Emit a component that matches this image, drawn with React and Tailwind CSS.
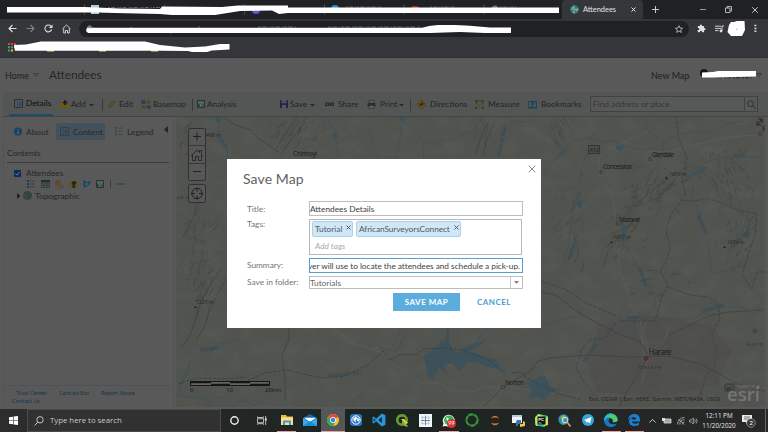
import React from "react";

function Svg({ w, h, vb, className = "", children }) {
  return (
    <svg width={w} height={h} viewBox={vb || `0 0 ${w} ${h}`} className={`block shrink-0 ${className}`} fill="none">
      {children}
    </svg>
  );
}

/* ---------- Browser ---------- */

function BrowserChrome() {
  return (
    <div className="relative h-[58px] w-full shrink-0 bg-[#35363a]">
      <div className="flex h-[19px] bg-[#202124]">
        <div className="w-[562px] shrink-0" />
        <div className="flex w-[81px] items-center rounded-t-[4px] bg-[#35363a] pl-[8px]">
          <Svg w={9} h={9}>
            <circle cx="4.5" cy="4.5" r="4.2" fill="#2d6f9c" />
            <path d="M1 3l2-2 2 1-1 2-2 1zM5 4l3-1 .5 2L6 7zM2 6l2 0 1 2-2 0z" fill="#6fa84f" />
            <path d="M.3 4.5h8.4M4.5.3v8.4" stroke="#9fc6da" strokeWidth=".4" />
          </Svg>
          <span className="ml-[4px] w-[48px] text-[7.4px] leading-[10px] text-[#e4e5e7]">Attendees</span>
          <Svg w={5} h={5}><path d="M.5.5l4 4M4.500.5l-4 4" stroke="#e8eaed" strokeWidth="1" /></Svg>
        </div>
        <div className="flex grow items-center pl-[9px]">
          <Svg w={7} h={7}><path d="M3.500 0v7M0 3.500h7" stroke="#c8cacd" strokeWidth="1" /></Svg>
          <Svg w={6} h={6} className="ml-[41px]"><path d="M0 2.500h6" stroke="#b9babc" strokeWidth=".8" /></Svg>
          <Svg w={7} h={7} className="ml-[19px]"><path d="M.5 2h4.500v4.500H.5zM2 2V.5h4.500V5H5" stroke="#d5d6d8" strokeWidth=".8" /></Svg>
          <Svg w={6} h={6} className="ml-[20px]"><path d="M.2.2l5.600 5.600M5.800.2L.2 5.800" stroke="#d5d6d8" strokeWidth=".9" /></Svg>
        </div>
      </div>
      <div className="flex h-[19px] items-center pl-[8px]">
        <Svg w={9} h={9}><path d="M8.500 4.500H1M4.500 1L1 4.500 4.500 8" stroke="#dfe0e3" strokeWidth="1.100" /></Svg>
        <Svg w={9} h={9} className="ml-[9px]"><path d="M.5 4.500H8M4.500 1L8 4.500 4.500 8" stroke="#808186" strokeWidth="1.100" /></Svg>
        <Svg w={9} h={9} className="ml-[9px]">
          <path d="M7.600 5.500A3.400 3.400 0 1 1 7 2.300" stroke="#dfe0e3" strokeWidth="1.100" /><path d="M8.500.5v3.600H4.900z" fill="#dfe0e3" />
        </Svg>
        <Svg w={9} h={10} className="ml-[9px]"><path d="M.4 5L4.500 1l4.100 4M1.700 4.500V9h1.800V6.500h2V9h1.800V4.500" stroke="#dfe0e3" strokeWidth=".9" /></Svg>
        <div className="ml-[8px] flex h-[16px] w-[610px] items-center justify-end rounded-full bg-[#202124] pr-[6px]">
          <Svg w={8} h={8} vb="0 0 24 24"><path d="M12 2l3 7 8 .7-6 5 2 7.600-7-4.200-7 4.200 2-7.600-6-5 8-.7z" stroke="#c4c6c9" strokeWidth="2.400" /></Svg>
        </div>
        <Svg w={9} h={9} vb="0 0 24 24" className="ml-[8px]">
          <path d="M20.500 11H19V7a2 2 0 0 0-2-2h-4V3.500a2.500 2.500 0 0 0-5 0V5H4a2 2 0 0 0-2 2v3.800h1.500a2.700 2.700 0 0 1 0 5.400H2V20a2 2 0 0 0 2 2h3.800v-1.500a2.700 2.700 0 0 1 5.400 0V22H17a2 2 0 0 0 2-2v-4h1.500a2.500 2.500 0 0 0 0-5z" fill="#e1e2e4" />
        </Svg>
        <Svg w={9} h={8} className="ml-[9px]">
          <path d="M0 1.200h6M0 3.400h6M0 5.600h3.500M7 6V1h2" stroke="#dfe0e3" strokeWidth=".9" /><circle cx="6" cy="6" r="1.400" fill="#dfe0e3" />
        </Svg>
        <Svg w={18} h={16} className="ml-[3px]"><path d="M4 1l3 0L10 0 17.500 0 18 9 15 15 4 15 .5 11 2 4z" fill="#fff" /><path d="M9 9l1.500-1.500" stroke="#888" strokeWidth=".7" /></Svg>
        <Svg w={3} h={9} className="ml-[9px]"><path d="M.4.800h2v1.500h-2zM.4 3.700h2v1.500h-2zM.4 6.600h2v1.500h-2z" fill="#d6d8da" /></Svg>
      </div>
      <div className="flex h-[19px] items-center pl-[8px]">
        <Svg w={8} h={9}>
          <path d="M0 0h2v2H0zM3 0h2v2H3zM6 0h2v2H6z" fill="#dc4636" /><path d="M0 3.300h2v2H0zM0 6.600h2v2H0z" fill="#41a560" />
          <path d="M3 3.300h2v2H3z" fill="#4286ef" /><path d="M6 3.300h2v2H6zM3 6.600h2v2H3z" fill="#edb93a" />
        </Svg>
      </div>
      <svg className="absolute left-0 top-0" width="768" height="58" viewBox="0 0 768 58" fill="none">
        <path d="M84.500 4v11M164.500 4v11M244.500 4v11M324.500 4v11M404 4v11M484 4v11" stroke="#55565a" strokeWidth=".7" />
        <rect x="91" y="5" width="8" height="9" fill="#a9d1de" />
        <circle cx="256" cy="10" r="4" fill="#5b56df" /><circle cx="335" cy="9" r="4" fill="#238fd1" />
        <path d="M411 7q4-2 8 0v5h-8z" fill="#d52524" /><circle cx="495" cy="9" r="3.500" fill="#777" />
        <path d="M430 7h24M346 7h35M500 7h16M108 7.500h52" stroke="#66676b" strokeWidth="1" strokeDasharray="2 1.200 4 2 1 1" />
        <path d="M7 7L85 7L120 8.500L160 9L162 6.500L222 7L238 5.500H288V7.500H559V13H288L279 14L272 10.500L240 11L215 15H172L160 14L115 13L98 12.500H7z" fill="#fff" />
        <path d="M89 26.500h3M130 28l2-1M170 33h2M198 27h2M258 27h38M328 27h92" stroke="#5f6064" strokeWidth="1" strokeDasharray="3 1 5 2 1 1" />
        <path d="M87 27.500L95 27.800H422L429 26L438 25H455L470 25.800L490 27.500H511V33H485L460 32L430 33H88L86 31z" fill="#fff" />
        <path d="M88 29v-1.500q0-2 1.300-2T90.600 27.500V29" stroke="#bbb" strokeWidth=".6" />
        <path d="M47 50.800h7M99 50.800h7M151 50.800h7" stroke="#edc76c" strokeWidth="1.500" />
        <path d="M14 45L26 44.500L41 41.500H145L160 45L185 47.500L205 46.500L220 44H229.500V49.500L212 50.500L207 52H192L188 51L160 50.800H15z" fill="#fff" />
        <path d="M0 57.500h768" stroke="#303136" />
      </svg>
    </div>
  );
}

/* ---------- App header and toolbar ---------- */

function Caret() {
  return <Svg w={5} h={3} className="mt-[2px]"><path d="M0 0h5L2.500 2.600z" fill="#272727" /></Svg>;
}
function Sep() {
  return <div className="mt-[2px] h-[12px] w-px shrink-0 bg-[#393939]" />;
}

function MapHeader() {
  return (
    <div className="flex h-[34px] shrink-0 items-center text-[#202020]">
      <span className="w-[27px] pl-[5px] text-[9px] whitespace-nowrap pt-[2px]">Home</span>
      <Svg w={6} h={4} className="ml-[6px]"><path d="M.4.500h5L2.900 3.500z" stroke="#2d2d2d" strokeWidth=".6" /></Svg>
      <span className="ml-[10px] text-[11.800px] whitespace-nowrap text-[#252525]">Attendees</span>
      <div className="grow" />
      <span className="w-[49px] text-[9px] whitespace-nowrap pt-[2px]">New Map</span>
      <svg width="68" height="14" viewBox="700 68 68 14" fill="none" className="block shrink-0">
        <circle cx="704" cy="73" r="4" fill="#151515" />
        <path d="M715 77.500h37" stroke="#333" strokeWidth="1.500" strokeDasharray="2 1 4 2" />
        <path d="M702 72.500L713 72L718 71H756V76.500L714 77.500H702z" fill="#fff" />
        <path d="M757 73.500h4.500l-2.200 3z" stroke="#252525" strokeWidth=".6" />
      </svg>
    </div>
  );
}

function Toolbar() {
  const t = "whitespace-nowrap text-[8.300px] leading-[12px]";
  return (
    <div className="ml-[3px] flex h-[25px] shrink-0 items-center border-b border-[#434545] bg-[#535655] text-[#242424]">
      <div className="flex h-[24px] w-[54px] shrink-0 items-center pl-[6px]">
        <div className="flex h-full w-[44px] items-center border-b-2 border-[#1b4d68] pl-[5px]">
          <Svg w={9} h={9}><path d="M.5.500h8v8h-8z" stroke="#252d35" strokeWidth=".9" /><path d="M3.500.500v8" stroke="#39434b" strokeWidth=".6" /><path d="M5 3h2v4H5z" fill="#214b71" /></Svg>
          <span className={`${t} ml-[3px] text-[#0c0c0c]`}>Details</span>
        </div>
      </div>
      <div className="flex w-[45px] shrink-0 items-center pl-[3px]">
        <Svg w={9} h={9}><path d="M0 4l2-2 2 2h4l1 4H0z" fill="#6d5812" /><path d="M5 0v5M2.800 2.500h4.600" stroke="#181818" strokeWidth="1.600" /></Svg>
        <span className={`${t} ml-[2px] w-[18px]`}>Add</span><Caret />
      </div>
      <Sep />
      <div className="flex w-[38px] shrink-0 items-center pl-[5px]">
        <Svg w={8} h={8}><path d="M.5 7.500l1-2.500L6 .7l1.400 1.500L3 6.700z" fill="#625021" stroke="#3a3016" strokeWidth=".4" /></Svg>
        <span className={`${t} ml-[3px]`}>Edit</span>
      </div>
      <div className="flex w-[51px] shrink-0 items-center">
        <Svg w={10} h={9}>
          <path d="M0 0h4.500v4H0z" fill="#324550" /><path d="M5.500 0H10v4H5.500z" fill="#60512b" /><path d="M0 5h4.500v4H0z" fill="#5e4c2b" /><path d="M5.500 5H10v4H5.500z" fill="#30485a" /><path d="M1 1l3 2M6 1l3 2M1 6l3 2M6 6l3 2" stroke="#1e3431" strokeWidth=".7" />
        </Svg>
        <span className={`${t} ml-[2px]`}>Basemap</span>
      </div>
      <Sep />
      <div className="flex w-[87px] shrink-0 items-center pl-[4px]">
        <MiniMap />
        <span className={`${t} ml-[2px]`}>Analysis</span>
      </div>
      <div className="flex w-[45px] shrink-0 items-center">
        <Svg w={8} h={8}><path d="M0 0h8v8H0z" fill="#272149" /><path d="M1.500 0h5v3.200h-5zM2 5h4v3H2z" fill="#555761" /><path d="M2.500 1.500h3" stroke="#333" strokeWidth=".5" /></Svg>
        <span className={`${t} ml-[2px] w-[20px]`}>Save</span><Caret />
      </div>
      <div className="flex w-[42px] shrink-0 items-center">
        <Svg w={9} h={5}><path d="M.7 1h2.800v2.500H.7zM5.500 1h2.800v2.500H5.500zM2.500 2.200h4" stroke="#292929" strokeWidth="1.100" /></Svg>
        <span className={`${t} ml-[4px]`}>Share</span>
      </div>
      <div className="flex w-[43px] shrink-0 items-center">
        <Svg w={9} h={9}><path d="M.5 3h8v3.500h-8z" fill="#2c3031" /><path d="M2 .5h5V3H2zM2 5.500h5v3H2z" fill="#606362" stroke="#292c2c" strokeWidth=".6" /></Svg>
        <span className={`${t} ml-[4px] w-[19px]`}>Print</span><Caret />
      </div>
      <Sep />
      <div className="flex w-[64px] shrink-0 items-center pl-[6px]">
        <Svg w={9} h={9}><path d="M4.500 0L9 4.500 4.500 9 0 4.500z" fill="#6a5411" stroke="#2d2813" strokeWidth=".5" /><path d="M3.300 6V4H6M4.800 2.700L6.200 4 4.800 5.300" stroke="#111" strokeWidth=".9" /></Svg>
        <span className={`${t} ml-[4px]`}>Directions</span>
      </div>
      <div className="flex w-[53px] shrink-0 items-center">
        <Svg w={9} h={9}><path d="M1.500 1h6v4h-6z" stroke="#1c5034" strokeWidth="1" /><path d="M0 4.500h9v3H0z" fill="#715238" /><path d="M0 0h2.500v2.500H0zM6.500 0H9v2.500H6.500zM0 7h2v2H0zM7 7h2v2H7z" fill="#214a34" /><path d="M2 5.500v2M4.500 5.500v2M7 5.500v2" stroke="#3c2d20" strokeWidth=".6" /></Svg>
        <span className={`${t} ml-[4px]`}>Measure</span>
      </div>
      <div className="flex w-[62px] shrink-0 items-center">
        <Svg w={9} h={9}><path d="M.5 1.500h3.500v6H.5zM4.500 1.500h4v6h-4z" stroke="#20394c" strokeWidth=".8" /><path d="M0 8.300h9M5.500 0v4.500M6.800 0v4.500" stroke="#155275" strokeWidth="1" /></Svg>
        <span className={`${t} ml-[4px]`}>Bookmarks</span>
      </div>
      <div className="flex h-[16px] w-[168px] shrink-0 items-center border border-[#404242] bg-[#575959]">
        <span className={`${t} w-[153px] pl-[2px] text-[#373737]`}>Find address or place</span>
        <div className="flex h-full grow items-center justify-center border-l border-[#404242]">
          <Svg w={9} h={9}><circle cx="3.600" cy="3.600" r="2.900" stroke="#252525" strokeWidth=".8" /><path d="M5.700 5.700l3 3" stroke="#252525" strokeWidth="1" /></Svg>
        </div>
      </div>
    </div>
  );
}

function MiniMap() {
  return <Svg w={8} h={8}><path d="M.4.400h7.200v7.200H.4z" fill="#3e5551" stroke="#1d2a2c" strokeWidth=".8" /><path d="M1 2l2 1 1-2M3 7l1-3 3-2" stroke="#777645" strokeWidth="1" /><path d="M1 6l2-1" stroke="#222" /></Svg>;
}

/* ---------- Side panel ---------- */

function SidePanel() {
  const t = "whitespace-nowrap text-[8.400px] leading-[12px]";
  return (
    <div className="ml-[3px] flex w-[171px] shrink-0 flex-col border-x border-[#525354] pr-[2px] text-[#272727]">
      <div className="flex h-[28px] items-center pt-[1px] pl-[10px]">
        <Svg w={8} h={9}><circle cx="4" cy="4.500" r="4" fill="#17435f" /><path d="M4 2v1M4 4v3" stroke="#777" strokeWidth="1.100" /></Svg>
        <span className={`${t} ml-[4px] w-[30px]`}>About</span>
        <div className="flex h-[17px] w-[49px] items-center bg-[#42515b] pl-[4px]">
          <Svg w={9} h={9}><path d="M.5.500h8v8h-8z" stroke="#303c45" strokeWidth=".8" /><path d="M3 .5v8" stroke="#303c45" strokeWidth=".6" /><path d="M5 3h1.500v4H5z" fill="#253f56" /></Svg>
          <span className={`${t} ml-[4px]`}>Content</span>
        </div>
        <Svg w={8} h={9} className="ml-[10px]"><path d="M0 0h2v2H0z" fill="#175273" /><path d="M0 3.300h2v2H0z" fill="#5a4720" /><path d="M0 6.600h2v2H0z" fill="#1c5839" /><path d="M3.500 1H8M3.500 4.300H8M3.500 7.600H8" stroke="#30475a" strokeWidth=".9" /></Svg>
        <span className={`${t} ml-[4px] w-[37px]`}>Legend</span>
        <Svg w={4} h={7} className="mb-[4px]"><path d="M4 0v7L0 3.500z" fill="#252525" /></Svg>
      </div>
      <div className="ml-[3px] flex h-[18px] w-[162px] items-center border-b border-[#3c3c3c]"><span className={`${t} -mt-[2px]`}>Contents</span></div>
      <div className="mt-[4px] flex h-[12px] items-center pl-[10px]">
        <Svg w={7} h={7}><rect width="7" height="7" rx="1" fill="#092b61" /><path d="M1.400 3.500l1.500 1.600L5.700 1.900" stroke="#888" strokeWidth=".9" /></Svg>
        <span className={`${t} ml-[5px]`}>Attendees</span>
      </div>
      <div className="flex h-[10px] items-center pl-[23px]">
        <Svg w={9} h={8}><path d="M1 0v8" stroke="#173e50" strokeWidth="2" strokeDasharray="2 1" /><path d="M3 1h5M3 4h5M3 7h5" stroke="#343434" strokeDasharray="1.500 .7" /></Svg>
        <Svg w={9} h={8} className="ml-[5px]"><path d="M.5.500h8v7h-8zM.5 3h8M.5 5.300h8M3 1v6M6 1v6" stroke="#30393e" strokeWidth=".8" /><path d="M0 0h9v2H0z" fill="#222f39" /></Svg>
        <Svg w={9} h={9} className="ml-[5px]"><circle cx="3" cy="3" r="3" fill="#6c4132" /><path d="M3 2l5 3-1 4H2z" fill="#5a5428" /><path d="M5 5h4v4H5z" fill="#465166" /></Svg>
        <Svg w={9} h={8} className="ml-[5px]"><path d="M0 1h9v7H0z" fill="#665522" /><path d="M3.500 8V5L2.500 3 4 1h2l1.500 2L6 5v3z" fill="#252525" /></Svg>
        <Svg w={8} h={8} className="ml-[5px]"><path d="M0 0l4 2 4-1-2 4-5 3z" fill="#1a465c" /><circle cx="3.500" cy="4" r="1.500" fill="#3e6272" /></Svg>
        <div className="ml-[5px]"><MiniMap /></div>
        <div className="ml-[6px] h-[8px] w-px bg-[#3c3c3c]" />
        <Svg w={9} h={2} className="ml-[5px]"><path d="M0 1h2M3.200 1h2M6.400 1h2" stroke="#173e5a" strokeWidth="1.300" /></Svg>
      </div>
      <div className="flex h-[13px] items-center pl-[13px]">
        <Svg w={4} h={6}><path d="M0 0l3.500 3L0 6z" fill="#202020" /></Svg>
        <Svg w={9} h={9} className="ml-[2px]"><circle cx="4.500" cy="4.500" r="4" fill="#404948" stroke="#2b3333" strokeWidth=".7" /><path d="M4 1.500l3 1 .5 3-3 2-1-3z" fill="#214f38" /></Svg>
        <span className={`${t} ml-[3px]`}>Topographic</span>
      </div>
      <div className="grow" />
      <div className="ml-[2px] h-[22px] w-[164px] border-t border-[#505152] pt-[3px] pl-[6px] text-[5.700px] leading-[8px] whitespace-nowrap text-[#18374a]">
        <div className="flex pl-[4px]"><span className="w-[43px]">Trust Center</span><span className="w-[42px]">Contact Esri</span><span>Report Abuse</span></div>
        <div>Contact Us</div>
      </div>
    </div>
  );
}

/* ---------- Map ---------- */

function makeRelief() {
  let s = 73;
  const rnd = () => ((s = (s * 16807) % 2147483647) / 2147483647);
  const clusters = [
    [188, 145, 14, 30, -1, 30], [200, 285, 14, 50, -1.1, 60], [200, 225, 18, 25, -1, 25],
    [288, 137, 34, 18, -0.9, 35], [482, 137, 10, 18, -1.2, 18], [558, 130, 12, 16, 1.2, 22],
    [655, 190, 40, 30, -0.7, 90], [625, 230, 25, 35, -0.9, 50], [725, 180, 32, 40, 1.1, 75],
    [735, 245, 22, 35, -1, 40], [565, 220, 20, 60, -1.1, 30], [655, 285, 50, 25, -0.3, 18],
  ];
  const strokes = [];
  clusters.forEach(([cx, cy, rx, ry, a, n]) => {
    for (let i = 0; i < n; i++) {
      const x = cx + (rnd() + rnd() - 1) * rx;
      const y = cy + (rnd() + rnd() - 1) * ry;
      const l = 2 + rnd() * 6;
      const g = a + (rnd() - 0.5) * 0.9;
      const dx = Math.cos(g) * l;
      const dy = Math.sin(g) * l;
      strokes.push(`M${x.toFixed(1)} ${y.toFixed(1)}q${(dx / 2 + 1).toFixed(1)} ${(dy / 2 + 1).toFixed(1)} ${dx.toFixed(1)} ${dy.toFixed(1)}`);
    }
  });
  return strokes;
}
const relief = makeRelief();

function MapCanvas() {
  return (
    <svg width="589" height="290" viewBox="176 117 589 290" className="block" fill="none" fontFamily="'Noto Sans', sans-serif">
      <rect x="176" y="117" width="589" height="290" fill="#51534f" />
      <filter id="terrain" x="0" y="0" width="100%" height="100%">
        <feTurbulence type="fractalNoise" baseFrequency=".05 .07" numOctaves="4" seed="8" />
        <feColorMatrix values="0 0 0 0 .22  0 0 0 0 .23  0 0 0 0 .2  .8 0 0 0 -.32" />
      </filter>
      <rect x="176" y="117" width="589" height="290" filter="url(#terrain)" opacity=".28" />
      <path d="M600 325l40-10 70 10 22 25-15 35-60 12-60-5-10-30z" fill="#4b4c49" opacity=".4" />
      <g stroke="#3b3e36" strokeLinecap="round">
        <path d={relief.filter((_, i) => i % 2).join("")} strokeWidth="1.200" opacity=".4" />
        <path d={relief.filter((_, i) => !(i % 2)).join("")} strokeWidth=".8" opacity=".4" />
      </g>
      <path d="M220 270l-8 12-12 22-4 14-6 18-9 12M226 278l-8 16-8 14-6 20-8 12M200 200l-8 20-10 18M297 117l-10 14-12 20M305 122l-14 18-10 14M488 122l-6 12-6 20M494 124l-7 14-4 18M660 185l-18 14-10 8-8 12M632 222l-14 16-10 14-5 16" stroke="#3a3d37" strokeWidth=".9" opacity=".65" />
      <g stroke="#5c5e59" strokeWidth=".8">
        <path d="M601 180l10 12 3 12 1 18 8 15-5 16 2 20 7 15 5 20 8 12 4 25" />
        <path d="M600 172l-2-6 2-10 16-10 32-15M566 117l10 14 14 15M758 135l-30 2-34 8-22 6-25 1" />
        <path d="M333 328l17 14 30 10 18 15 22 16h21l9 9h22l12-5h24l50 7M648 358l-6 25M650 357l-6-25 2-12M637 325l4 12 4 20M645 357l20-18 5-14" />
      </g>
      <g stroke="#434442" strokeWidth=".9">
        <path d="M223 117l12 8 16 5 8 9 20 13M289 328v12l-7 14 3 25v21M484 406l18-18 16-10 13-7 7-10 12-3 38-3 40 2 42-1 30 8 38 20 27 7" />
        <path d="M541 292l15 3 20 16 23 13 24 12 17 5 8 15M648 358l-20 32-9 17" />
        <path d="M668 335l20-9 20-10 20-4 36-2" />
      </g>
      <g stroke="#40404b" strokeWidth=".9" strokeDasharray="4 1.300">
        <path d="M541 281l24 8 21 14 30 13 6 5h33l6-22 7-14-8-14 6-9 4-14-4-18 6-17 10-13 12 1 13-3 15 5 15 7 20 4-2 20-8 25-5 16 10 14 5-17h14M616 323l-11 15-15 2-8 8-6 20 8 14 12 15M668 287l22 8 18 2 10 6 2 16-8 15 5 20-2 12-9 10-7 23M686 196l-4-18 5-20-8-18-3-23" />
      </g>
      <g stroke="#3b525b" strokeWidth=".8">
        <path d="M219 117l-1 19 8 13 1 12M322 117l3 8-9 5-6 15-7 5M326 117l9 14 4 28M356 127l15 7 4 20 5 6M400 120l12 7 8 9 3 10 1 17M402 121l-3 23-4 18M423 143l16-1 16-4 12-6 18-3" />
        <path d="M176 332l4 -2M177 395l8-18 6-18 14-8 18-8 17-3M187 398l-9-9 5-12 8-8M176 395l30 4 4 8 3-8 10-2 12 10 5-8 14 6 12-3" />
        <path d="M195 203v40l-13 20-6 8M190 263l18-3 10-6 8-4M180 280l16-1 8 6 14 2 8 6" />
        <path d="M542 175l14-17 16-17 15-3 14 4 14-1 8 5 18 4 14-2 20-12 20-5 18 2 14-9 17-3M587 153l-6 17-4 26-5 14-3 34-8 24-8 8M645 117l3 14 16 10-3 18-8 12-10 20-18 22M624 245l8 10 7 17 10 15 7 16-13 18M694 180l-2 15 8 20 6 18M757 183l-6 20-8 27-4 12M758 157h-34l-13 3-28 15M707 240l5 34 17-4 15-10" />
        <path d="M542 325l34-9M610 336l17-9 20-10 40 3 20-7M512 121l16 1 8-3M361 328l20 20 16 3 10-20M402 326l-10 22M468 352l8-10 12-15M346 406l17-13M710 303l15 5 13-2 10 5 12-2" />
      </g>
      <g fill="#3d515a">
        <path d="M423.700 356.700L436 346.700L440 342L445.700 340L446.700 328H449.300L448.700 341.700L452.700 350L459.300 353.300L462.700 348.300L472.700 344.300L486 340L476 347.700L469 351.700L486 356.700L496 360L507.700 375L496 368L486 366.700L479 363L469 361.700L464 365L459 371.700L452.700 363.300L444 365L446 374L439 368L432.700 380L427.700 375z" />
        <path d="M533.700 380L543.700 375L547 380L550 386.700L560 390L548.700 393.300L543.700 401.700L538.700 396.700L528.700 398L532 390L527 383z" />
        <path d="M558 157l4-6 4-3-2 7zM616 145l8 2-3 4-5-2zM657 157l3-3-2 6zM686 177l14-9 8-2-3 5-9 3-7 4zM333 133h5v5h-4zM398 117h7l-1 5-5-3zM621 230l6-3-1 9-2 8-3-7zM578 200l5 1-2 8-3-2zM215 117h6v5h-5z" />
        <path d="M221 137l6 9 1 12-2-9-7-8z" />
      </g>
      <path d="M178 384l18-6 36 1 12-2 5 3 16-7 22-3 16 4 20 4 22-2 24-12 14-13 6 9 12-6 15 1 7-6 20-1 20 2 28 11 6 7M512 373l8-1 8 7 16 8 14 7 22 5" stroke="#2f4344" strokeWidth=".9" strokeDasharray="3 1.500" />

      <g fill="#1c1d1b" fontSize="6.300">
        <text x="293" y="155.500" textLength="24">Chinhoyi</text>
        <text x="652" y="156.500" textLength="22">Glendale</text>
        <text x="603" y="169" textLength="29">Concession</text>
        <text x="619" y="222" textLength="21">Mazowe</text>
        <text x="505" y="384.500" textLength="19">Norton</text>
        <text x="648.500" y="355" fontSize="8" textLength="23">Harare</text>
        <text x="762" y="131">B</text>
      </g>
      <g fill="#2a2b29" fontSize="5.300" fontStyle="italic">
        <text x="206" y="137">466 m</text><text x="196" y="304">1221 m</text><text x="669" y="176">1618 m</text><text x="613" y="239">1617 m</text><text x="727" y="244">1654 m</text>
      </g>
      <g fill="#29475a" fontSize="5.400" fontStyle="italic">
        <text x="200" y="351" textLength="19" transform="rotate(-5 200 351)">Dzingwe</text>
        <text x="328" y="377" textLength="34" transform="rotate(-4 328 377)">Munyati Rvr</text>
        <text x="734" y="157">Poti</text>
        <text x="500" y="157" transform="rotate(-78 500 157)">Mazowe River</text>
        <text x="570" y="261" transform="rotate(-73 570 261)">Madzagavu</text>
        <text x="638" y="268" transform="rotate(72 638 268)">Mazowe</text>
        <text x="696" y="216" transform="rotate(65 696 216)">Mateperi</text>
        <text x="746" y="237" transform="rotate(-72 746 237)">Inyauri</text>
        <text x="626" y="319">Gwebi</text>
        <text x="702" y="313" transform="rotate(-16 702 313)">Umwindsi</text>
        <text x="585" y="363" transform="rotate(-58 585 363)">Marimba</text>
      </g>
      <g fill="#343634" fontSize="6">
        <text x="638" y="368.500" textLength="23">Harare</text><text x="746" y="346" textLength="17">Goro</text><text x="177" y="199" fontSize="5">a k u</text>
      </g>
      <rect x="588.500" y="145.500" width="11" height="8" fill="#4b4d49" stroke="#2a2b2a" strokeWidth=".7" />
      <text x="589.700" y="151.700" fontSize="5" fill="#20211f">A12</text>
      <rect x="725" y="384" width="9" height="7" fill="#4b4d49" stroke="#343634" strokeWidth=".8" /><text x="726.500" y="389.500" fontSize="4" fill="#20211f">A3</text>
      <g stroke="#333532" strokeWidth=".7"><circle cx="650" cy="159" r="1.600" /><circle cx="601" cy="172" r="1.300" /><circle cx="617" cy="224" r="1.300" /><circle cx="503" cy="387" r="1.700" fill="#555" /><circle cx="760" cy="134" r="1.500" /></g>
      <path d="M194 308l1.500-2 1.500 2zM610 243l1.500-2 1.500 2zM665 179l1.500-2 1.500 2zM723 248l1.500-2 1.500 2z" fill="#1e1f1d" />
      <circle cx="646" cy="358.500" r="2" fill="#6c2c18" stroke="#35251e" strokeWidth=".5" />
      <circle cx="755" cy="331" r="2.500" fill="#414b40" />
      <path d="M757 125l5-6M758 119h4v4M757 121v4h4" stroke="#1c1c1c" strokeWidth=".8" />

      <g stroke="#202020" strokeWidth="1">
        <rect x="188.500" y="128.500" width="17" height="52" rx="2" fill="#575757" stroke="#303030" /><path d="M188 145.500h18M188 163.500h18" stroke="#303030" strokeWidth=".8" />
        <path d="M193 136.500h8M197 132.500v8M193 171.500h8" />
        <path d="M191 156l6-6 2.500 2.500v-2h2v4l1.500 1.500M192.500 155v5.500h3v-4h3v4h3v-5.500" strokeWidth=".8" />
        <rect x="188.500" y="184.500" width="17" height="18" rx="2" fill="#575757" stroke="#303030" /><circle cx="197" cy="193.500" r="5.200" /><path d="M197 187.500v4M197 195.500v4M191 193.500h4M199 193.500h4" />
      </g>
      <rect x="190.500" y="381.500" width="79" height="4" fill="#656562" stroke="#151515" /><path d="M191 382.500h20M230 382.500h20M211 384.500h19M250 384.500h19" stroke="#171717" strokeWidth="1.500" />
      <g fill="#191919" fontSize="6"><text x="190" y="391.500">0</text><text x="226" y="391.500">10</text><text x="265" y="391.500" textLength="16">20km</text></g>
      <text x="589" y="401" fontSize="5.200" fill="#222" textLength="131">Esri, CGIAR | Esri, HERE, Garmin, METI/NASA, USGS</text>
      <text x="727" y="401" fontSize="18.500" fontWeight="600" fontFamily="'Open Sans', sans-serif" fill="#767674" textLength="33" lengthAdjust="spacingAndGlyphs">esri</text>
      <text x="737" y="387.500" fontSize="3.300" fill="#777" textLength="18">POWERED BY</text><circle cx="758" cy="387" r="1.500" fill="#777" />
    </svg>
  );
}

/* ---------- Save dialog ---------- */

function Tag({ className, children }) {
  return (
    <div className={`flex h-[16px] items-center justify-between rounded-[2px] border border-[#a8d3ee] bg-[#d0e7f7] pl-[2px] pr-[1px] text-[#4f5b62] ${className}`}>
      <span className="whitespace-nowrap">{children}</span>
      <Svg w={5} h={5} className="mb-[3px]"><path d="M.5.500l4 4M4.500.500l-4 4" stroke="#4e5c64" strokeWidth="1" /></Svg>
    </div>
  );
}

function SaveDialog() {
  const label = "w-[62px] shrink-0 whitespace-nowrap text-[#757575]";
  return (
    <div className="absolute left-[227px] top-[159px] h-[169px] w-[314px] bg-white text-[8.300px] leading-[12px]">
      <div className="flex justify-between pt-[6px] pr-[5px]">
        <h2 className="ml-[16px] mt-[4px] text-[14px] leading-[20px] font-normal whitespace-nowrap tracking-[.1px] text-[#616161]">Save Map</h2>
        <Svg w={8} h={8}><path d="M.7.700l6.600 6.600M7.300.700L.7 7.300" stroke="#8b8b8b" strokeWidth="1" /></Svg>
      </div>
      <div className="ml-[20px] mt-[12px] flex items-center">
        <span className={label}>Title:</span>
        <div className="flex h-[15px] w-[214px] items-center border border-[#bdbdbd] text-[#3e3e3e]">Attendees Details</div>
      </div>
      <div className="ml-[20px] mt-[3px] flex">
        <span className={`${label} -mt-[1px]`}>Tags:</span>
        <div className="flex h-[36px] w-[213px] flex-col border border-[#b8b8b8] pt-[1px] pl-[2px]">
          <div className="flex gap-[3px]">
            <Tag className="w-[41px]">Tutorial</Tag>
            <Tag className="w-[105px] tracking-[-.08px]">AfricanSurveyorsConnect</Tag>
          </div>
          <span className="mt-[3px] pl-[3px] italic text-[#aaaaaa]">Add tags</span>
        </div>
      </div>
      <div className="ml-[20px] mt-[3px] flex items-center">
        <span className={`${label} -mt-[1px]`}>Summary:</span>
        <div className="flex h-[15px] w-[214px] items-center justify-end overflow-hidden border border-[#55a0d0] pr-[2px] tracking-[-.03px] whitespace-nowrap text-[#3f3f3f]">ver will use to locate the attendees and schedule a pick-up.</div>
      </div>
      <div className="ml-[20px] mt-[3px] flex items-center">
        <span className={`${label} -mt-[1px]`}>Save in folder:</span>
        <div className="flex h-[13px] w-[214px] items-center justify-between border border-[#bdbdbd] text-[#666]">
          Tutorials
          <div className="flex h-full w-[12px] items-center justify-center border-l border-[#c9c9c9]"><Svg w={5} h={3}><path d="M0 0h5L2.500 3z" fill="#858585" /></Svg></div>
        </div>
      </div>
      <div className="mt-[4px] ml-[166px] flex text-[8px] leading-[18px] tracking-[.5px] font-bold">
        <div className="h-[18px] w-[67px] bg-[#5badde] text-center text-white">SAVE MAP</div>
        <div className="w-[68px] text-center text-[#4d9dcd]">CANCEL</div>
      </div>
    </div>
  );
}

/* ---------- Taskbar ---------- */

function TaskCell({ open, active, children }) {
  return (
    <div className={`flex h-full w-[23.200px] shrink-0 flex-col items-center ${active ? "bg-[#52585a]" : ""}`}>
      <div className="flex h-[22px] items-center">{children}</div>
      <div className={`h-px self-stretch ${active ? "" : "mx-[2px]"} ${open ? "bg-[#f19a9b]" : ""}`} />
    </div>
  );
}

function Taskbar() {
  return (
    <div className="relative flex h-[23px] shrink-0 items-center bg-linear-to-r from-[#2d2d2d] via-[#1b2321] to-[#282828] text-[#e7e7e7]">
      <div className="flex w-[27px] shrink-0 justify-center"><Svg w={9} h={9}><path d="M0 1.300l4-.6v3.500H0zM4.600.600L9 0v4.200H4.600zM0 4.800h4v3.500l-4-.6zM4.600 4.800H9V9l-4.400-.6z" fill="#fff" /></Svg></div>
      <div className="flex h-full w-[194px] shrink-0 items-center border border-[#494b4a] bg-[#313131] pl-[6px]">
        <Svg w={10} h={10}><circle cx="6" cy="3.800" r="3.200" stroke="#d4d4d4" strokeWidth=".9" /><path d="M3.800 6.200L.5 9.600" stroke="#d4d4d4" strokeWidth=".9" /></Svg>
        <span className="ml-[6px] pt-[1px] font-['Open_Sans'] text-[7.800px] whitespace-nowrap text-[#c8c8c8]">Type here to search</span>
      </div>
      <div className="flex w-[27px] shrink-0 justify-center"><Svg w={9} h={9}><circle cx="4.500" cy="4.500" r="3.700" stroke="#f1f1f1" strokeWidth="1.400" /></Svg></div>
      <div className="flex w-[27px] shrink-0 justify-center"><Svg w={10} h={9}><path d="M.5 2.700h6v4h-6zM.5.500v1h6v-1M.5 8.700v-1h6v1M8.700 0v9" stroke="#d9d9d9" strokeWidth=".8" /><path d="M7.800 2.500h2v2h-2z" fill="#ddd" /></Svg></div>
      <TaskCell open><Svg w={12} h={10}><path d="M0 0h5l1 1.500h6V10H0z" fill="#eeb946" /><path d="M0 2.500h12V10H0z" fill="#ffdf83" /><path d="M2 10V5.500h8V10H8V7.500H4V10z" fill="#3a9bd9" /></Svg></TaskCell>
      <TaskCell><Svg w={14} h={12}><path d="M0 4l7-4 7 4v8H0z" fill="#1168b1" /><path d="M1 3.700h12L7 8z" fill="#fff" /><path d="M0 4l7 4.500L14 4v8H0z" fill="#36acec" /><path d="M0 12l7-5 7 5z" fill="#1b8bd5" /></Svg></TaskCell>
      <TaskCell active open><Svg w={12} h={12} vb="-6 -6 12 12"><circle r="6" fill="#f4c52e" /><path d="M0 0L-5.200-3A6 6 0 0 1 5.200-3z" fill="#dd493c" /><path d="M0 0L-5.200-3A6 6 0 0 0 0 6L2.600 1.500z" fill="#34a55a" /><circle r="2.900" fill="#fff" /><circle r="2.200" fill="#3e7fe5" /></Svg></TaskCell>
      <TaskCell><Svg w={12} h={12}><rect width="12" height="12" rx="3" fill="#2676c1" /><circle cx="6" cy="6" r="4.200" stroke="#fff" strokeWidth="1" /><path d="M3 4.500l3-2 1.500 2L5.500 6 6 8.500 4 7zM7.500 4l2 1-1 2.500-1.500-.5z" fill="#fff" /></Svg></TaskCell>
      <TaskCell><Svg w={14} h={14} vb="0 0 24 24"><path d="M17 1l6 3v16l-6 3L7 14l-4 4-2-1V7l2-1 4 4zM17 7l-6 5 6 5zM3 9v6l3-3z" fillRule="evenodd" fill="#2598db" /></Svg></TaskCell>
      <TaskCell><Svg w={13} h={13}><circle cx="6" cy="6" r="4.700" stroke="#659b32" strokeWidth="2.700" /><path d="M6 6l6.500 6.500H9L6 9z" fill="#8ab52c" /><path d="M5 5h3l4 4-2 1z" fill="#e8d33e" /></Svg></TaskCell>
      <TaskCell><Svg w={13} h={13}><path d="M0 0h13v13H0z" fill="#eff6fb" /><path d="M2 3.500h9M2 6.500h9M2 9.500h9M3.500 2v9M6.500 1v11M9.500 2v9" stroke="#9fb4c6" strokeWidth=".7" strokeDasharray="1.500 .6" /><path d="M6.500 2v9M2 6.500h9" stroke="#58738d" strokeWidth=".8" /></Svg></TaskCell>
      <TaskCell open>
        <div className="relative">
          <Svg w={14} h={13}><path d="M.5 12.500l1-3A6 6 0 1 1 4 12z" fill="#f4f4f4" /><circle cx="7" cy="6.300" r="4.900" fill="#31b456" /><path d="M4.700 3.500q-1 2 2 4.500t4 .5l-1.300-1.400-1.200.6-2-2 .6-1.200z" fill="#fff" /></Svg>
          <span className="absolute top-[5px] left-[5px] flex h-[9px] w-[9px] items-center justify-center rounded-full bg-[#df302f] text-[5.500px] text-white">99</span>
        </div>
      </TaskCell>
      <TaskCell><Svg w={14} h={14}><circle cx="7" cy="7" r="5.600" stroke="#359b31" strokeWidth="2.100" strokeDasharray="5 .5" /></Svg></TaskCell>
      <TaskCell><Svg w={10} h={13}><path d="M.5 4.500Q5-1 9.500 4.500 5 2.600.5 4.500zM.5 8.500Q5 14 9.500 8.500 5 10.400.5 8.500z" fill="#df7035" /></Svg></TaskCell>
      <TaskCell><Svg w={13} h={13}><path d="M0 1h10v8H0z" fill="#eff3f6" /><path d="M0 1h10v2H0z" fill="#a8cce2" /><path d="M5 6h4v4H6v2H4V8z" fill="#3774a4" /><path d="M8 13V10h3V7l2 1v4z" fill="#efc548" /></Svg></TaskCell>
      <TaskCell><Svg w={13} h={13}><path d="M0 3l4-3 9 2v8l-4 3-9-2z" fill="#24d29c" /><path d="M0 4l3-4 5 2-4 9-3 1zM10 4l3-1v8l-4 1z" fill="#c9e657" /><path d="M2.500 2.500h8v8h-8z" fill="#111" /><text x="3.200" y="7" fontSize="4.400" fontWeight="bold" fill="#fff">PC</text><path d="M3.500 9h3" stroke="#fff" strokeWidth=".7" /></Svg></TaskCell>
      <TaskCell><Svg w={13} h={13}><circle cx="5.500" cy="5.500" r="5.200" fill="#378ab9" /><path d="M2 3l4-2 2 3-3 3zM4 8l3 1-2 2z" fill="#85b455" /><circle cx="7" cy="6" r="2.800" stroke="#d8e8ef" strokeWidth="1" /><path d="M9 8l3.500 4.500" stroke="#caa067" strokeWidth="1.700" /></Svg></TaskCell>
      <TaskCell><Svg w={12} h={12}><circle cx="6" cy="6" r="6" fill="#35a7db" /><path d="M2 6l7.500-3L8 9.500 5.500 7.700 4.500 9 4 7z" fill="#fff" /></Svg></TaskCell>
      <TaskCell open><Svg w={14} h={14}><path d="M0 8A7 7 0 0 1 14 7Q13 10 8.500 9 10 6 6 5 1 4 0 8z" fill="#4acb75" /><path d="M0 8Q1 4 6 5 3 8 6 10.500 9 12 13 10.500A7 7 0 0 1 0 8z" fill="#1878c8" /><path d="M0 6Q2 0 8 .3 4 3 0 8z" fill="#34afe1" /></Svg></TaskCell>
      <TaskCell open><Svg w={12} h={12} vb="0 0 24 24"><path d="M0 12C1 3 8 0 13 0c8 0 11 6 11 12v3H8c0 5 8 6 14 2v5c-9 4-20 2-20-7 0-4 3-7 7-8-1 2-1 3-1 4h8c1-7-10-7-16 1z" fill="#1a80d4" /></Svg></TaskCell>
      <div className="flex grow items-center pl-[3px]">
        <Svg w={7} h={4}><path d="M.4 3.500L3.500.500l3.100 3" stroke="#ddd" strokeWidth=".9" /></Svg>
        <Svg w={10} h={7} className="ml-[6px]"><path d="M2 2h7v4H2z" fill="#a5a5a5" stroke="#ddd" strokeWidth=".8" /><path d="M0 1h3v3H0z" fill="#ddd" /></Svg>
        <Svg w={8} h={8} className="ml-[5px]"><path d="M.5 7.500A7 7 0 0 1 7.500.500M2.700 7.500a5 5 0 0 1 4.800-4.800M5 7.500a3 3 0 0 1 2.500-2.500M7 7.500L1.500 2" stroke="#bcbcbc" strokeWidth=".8" /></Svg>
        <Svg w={9} h={8} className="ml-[4px]"><path d="M.5 3h1.700L4.300 1v6L2.200 5H.5zM5.600 2.500q1.500 1.500 0 3M7 1.500q2.500 2.500 0 5" stroke="#c5c5c5" strokeWidth=".7" /></Svg>
        <div className="ml-[4px] w-[34px] text-center font-['Open_Sans'] text-[6.300px] leading-[10px] whitespace-nowrap"><div>12:11 PM</div><div className="-mx-[2px]">11/20/2020</div></div>
        <Svg w={14} h={14} className="ml-[6px]"><path d="M0 1h10v7H6L4 10V8H0z" fill="#e9e9e9" /><path d="M2 3h6M2 5h5" stroke="#4b4b4b" strokeWidth=".8" /><circle cx="9" cy="9" r="4.300" fill="#343434" stroke="#aaa" strokeWidth=".7" /><text x="7.200" y="11.200" fontSize="6.500" fill="#fff">2</text></Svg>
      </div>
      <div className="mr-[2px] h-full w-px shrink-0 bg-[#666]" />
    </div>
  );
}

export default function App() {
  return (
    <div className="relative flex h-[432px] w-[768px] flex-col overflow-hidden bg-[#595959] font-[Lato,'Liberation_Sans',sans-serif]">
      <BrowserChrome />
      <MapHeader />
      <Toolbar />
      <div className="flex h-[290px] shrink-0">
        <SidePanel />
        <div className="ml-[2px]"><MapCanvas /></div>
      </div>
      <div className="h-[2px] shrink-0" />
      <Taskbar />
      <SaveDialog />
    </div>
  );
}
